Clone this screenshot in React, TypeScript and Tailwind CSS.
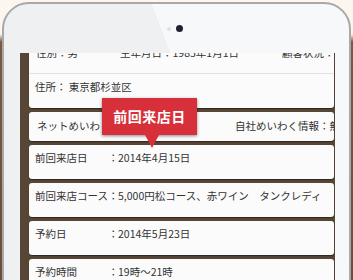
import React from "react";

const font = { fontFamily: '"Noto Sans CJK JP", "Noto Sans", sans-serif' };

function Row({ label, value }: { label: string; value: string }) {
  return (
    <div className="h-[34px] shrink-0 rounded-[3px] bg-[#fbfbfb] shadow-[0_1px_1px_rgba(0,0,0,0.45)] px-[6px] pt-[6px] text-[10.5px] leading-[14px] text-[#333] whitespace-nowrap overflow-hidden flex">
      <span className="w-[73px] shrink-0">{label}</span>
      <span className="w-[10px] shrink-0">：</span>
      <span className="shrink-0">{value}</span>
    </div>
  );
}

export default function App() {
  return (
    <div
      style={font}
      className="w-[353px] h-[280px] overflow-hidden pl-[2px] pt-[2px] bg-[linear-gradient(to_bottom,#fcf6ef_0,#fcf6ef_34px,#7a5a42_42px,#6b4e39_100%)]"
    >
      <div className="w-[349px] h-[300px] rounded-t-[27px] border-2 border-[#a7a9ac] bg-[linear-gradient(69deg,#eef0f2_57%,#f7f8f9_57%)] pl-[16px] pr-[14px] flex flex-col">
        {/* camera */}
        <div className="h-[49px] shrink-0 flex items-center pl-[147px] gap-[5px]">
          <span className="w-[4px] h-[4px] rounded-full bg-[#dfe1e5]" />
          <span className="w-[7px] h-[7px] rounded-full bg-[#1d2133]" />
        </div>

        {/* screen */}
        <div className="relative h-[240px] shrink-0 overflow-hidden bg-[#574636] pl-[9px] pr-[1px] flex flex-col gap-[4px]">
          <div className="mt-[-13px] shrink-0 rounded-[3px] bg-[#fbfbfb] shadow-[0_1px_1px_rgba(0,0,0,0.45)] text-[10.5px] leading-[14px] text-[#333] whitespace-nowrap overflow-hidden">
            <div className="h-[34px] px-[7px] pt-[6px] flex border-b border-[#e2e2e2]">
              <span className="w-[84px] shrink-0">性別：男</span>
              <span className="w-[162px] shrink-0">生年月日：1985年1月1日</span>
              <span className="shrink-0">顧客状況：新規</span>
            </div>
            <div className="h-[34px] px-[6px] pt-[6px]">住所： 東京都杉並区</div>
          </div>

          <div className="h-[29px] shrink-0 rounded-[3px] bg-[#fbfbfb] shadow-[0_1px_1px_rgba(0,0,0,0.45)] px-[8px] pt-[7px] text-[10.5px] leading-[14px] text-[#333] whitespace-nowrap overflow-hidden flex">
            <span className="w-[198px] shrink-0">ネットめいわく情報：無</span>
            <span className="shrink-0">自社めいわく情報：無</span>
          </div>

          <Row label="前回来店日" value="2014年4月15日" />
          <Row label="前回来店コース" value="5,000円松コース、赤ワイン　タンクレディ" />
          <Row label="予約日" value="2014年5月23日" />
          <Row label="予約時間" value="19時～21時" />

          {/* callout */}
          <div className="absolute left-[82px] top-[45px] flex flex-col items-start">
            <div className="w-[95px] h-[37px] bg-[#d8303a] shadow-[0_1px_3px_rgba(0,0,0,0.45)] flex items-center justify-center text-white text-[14px] font-bold tracking-[0.5px]">
              前回来店日
            </div>
            <div className="ml-[43px] w-0 h-0 border-l-[7px] border-r-[7px] border-t-[13px] border-l-transparent border-r-transparent border-t-[#d8303a]" />
          </div>
        </div>
      </div>
    </div>
  );
}
